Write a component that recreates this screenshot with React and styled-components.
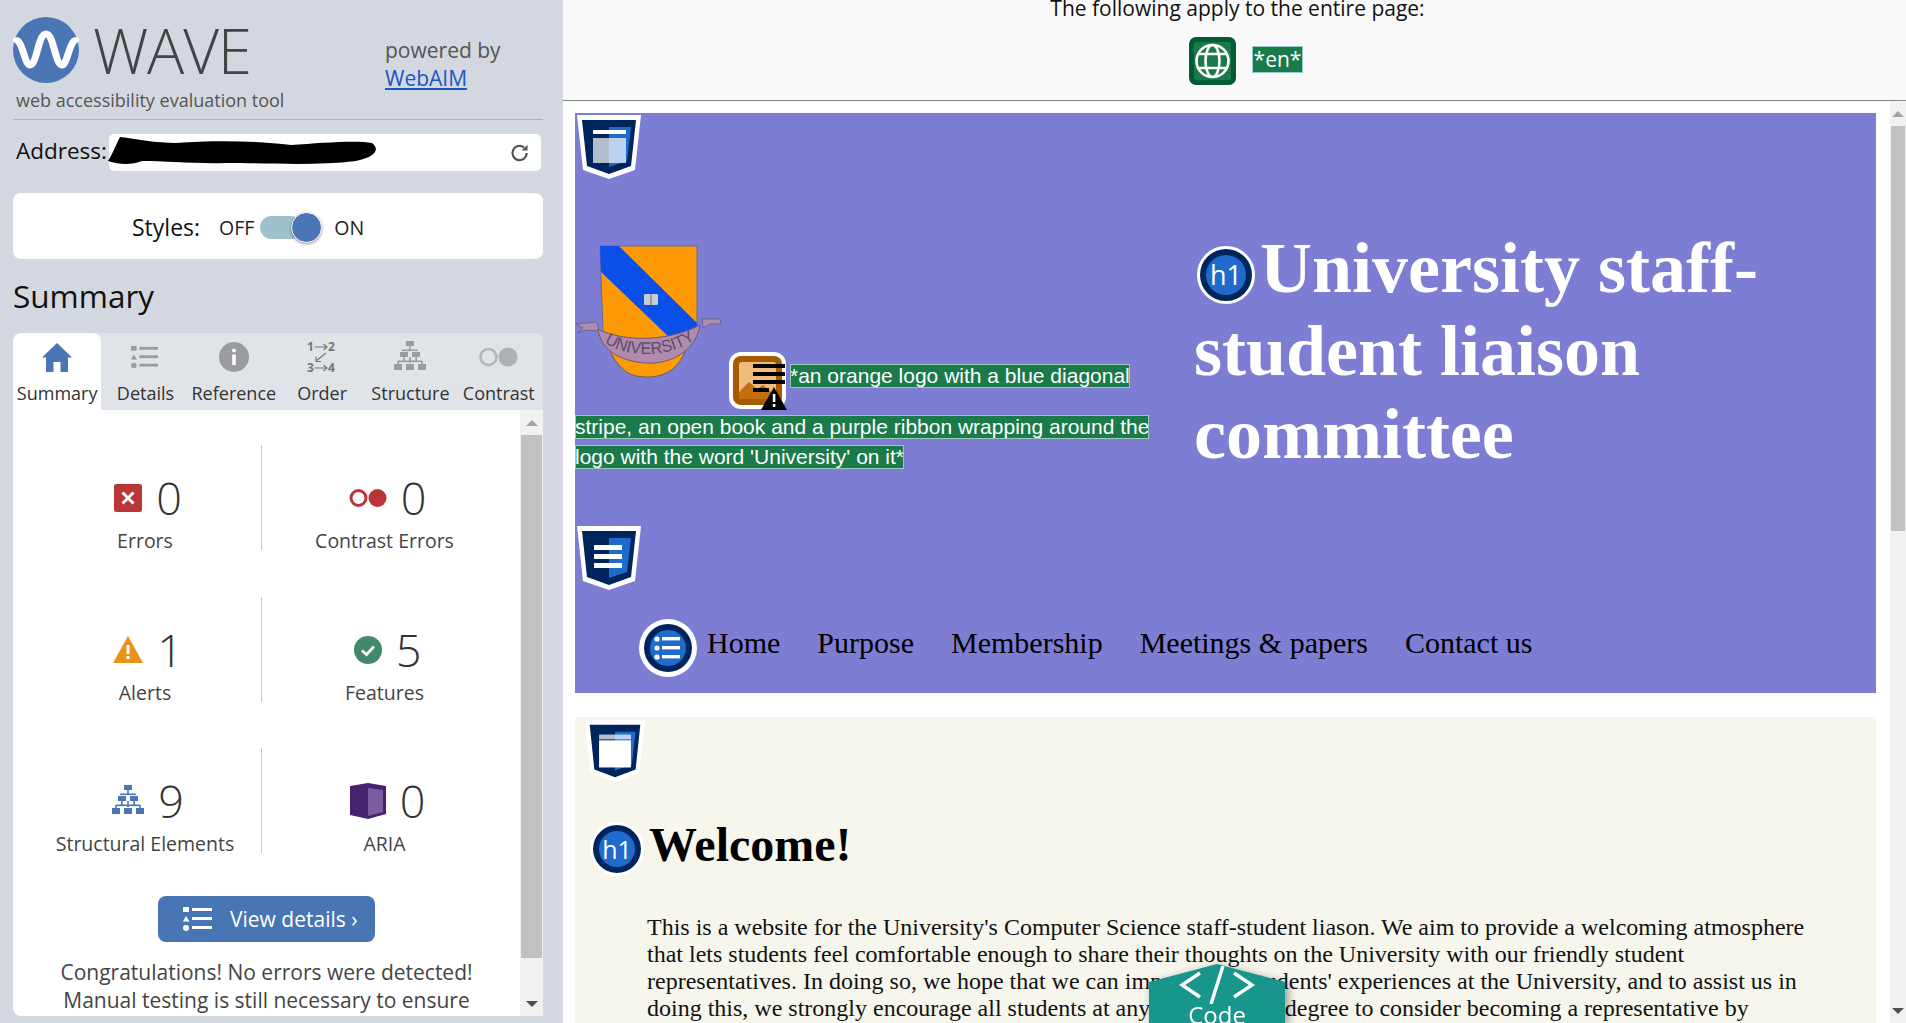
import React from "react";

import styled, { createGlobalStyle } from "styled-components";

const BLUE = "#4a76b5";
const NAVY = "#00245c";
const MID = "#1f6bcb";
const RED = "#b93538";
const SANS = `"Open Sans", "Noto Sans", sans-serif`;
const SERIF = `"Liberation Serif", serif`;

const tabs = [
  { label: "Summary", icon: "home" },
  { label: "Details", icon: "list" },
  { label: "Reference", icon: "info" },
  { label: "Order", icon: "order" },
  { label: "Structure", icon: "tree" },
  { label: "Contrast", icon: "contrast" },
];

const stats = [
  { label: "Errors", count: 0, icon: "error" },
  { label: "Contrast Errors", count: 0, icon: "contrastError" },
  { label: "Alerts", count: 1, icon: "alert" },
  { label: "Features", count: 5, icon: "feature" },
  { label: "Structural Elements", count: 9, icon: "structure" },
  { label: "ARIA", count: 0, icon: "aria" },
];

const navLinks = ["Home", "Purpose", "Membership", "Meetings & papers", "Contact us"];

const ListIcon = ({ color, size = 30 }) => (
  <svg width={size} height={size * 0.8} viewBox="0 0 30 24" fill={color}>
    <rect x="0" y="0" width="6" height="5" />
    <path d="M3 9 L6.5 14.5 L0 14.5 Z" />
    <circle cx="3" cy="21" r="3" />
    <rect x="9" y="1" width="20" height="3" />
    <rect x="9" y="10" width="20" height="3" />
    <rect x="9" y="19" width="20" height="3" />
  </svg>
);

const TreeIcon = ({ color, size = 32 }) => (
  <svg width={size} height={size} viewBox="0 0 32 32" fill={color}>
    <rect x="12" y="0" width="8" height="5" />
    <rect x="15.2" y="5" width="1.6" height="4" />
    <rect x="8" y="8.5" width="16" height="1.6" />
    <rect x="6" y="11" width="8" height="5" />
    <rect x="18" y="11" width="8" height="5" />
    <rect x="9" y="16" width="1.6" height="4" />
    <rect x="21.4" y="16" width="1.6" height="4" />
    <rect x="4" y="19.5" width="24" height="1.6" />
    <rect x="15.2" y="16" width="1.6" height="6" />
    <rect x="3.2" y="20" width="1.6" height="3" />
    <rect x="27.2" y="20" width="1.6" height="3" />
    <rect x="0" y="23" width="8" height="6" />
    <rect x="12" y="23" width="8" height="6" />
    <rect x="24" y="23" width="8" height="6" />
  </svg>
);

const TabIcon = ({ name, active }) => {
  const gray = "#9a9ca0";
  if (name === "home") {
    return (
      <svg width="30" height="29" viewBox="0 0 30 29" fill={active ? BLUE : gray}>
        <path d="M15 0 L30 14.5 L26 14.5 L26 29 L18.5 29 L18.5 19 L11.5 19 L11.5 29 L4 29 L4 14.5 L0 14.5 Z" />
      </svg>
    );
  }
  if (name === "list") return <ListIcon color={gray} size={28} />;
  if (name === "info") {
    return (
      <svg width="30" height="30" viewBox="0 0 30 30">
        <circle cx="15" cy="15" r="15" fill={gray} />
        <circle cx="15" cy="8.5" r="2" fill="#fff" />
        <rect x="13.2" y="12.5" width="3.6" height="10.5" fill="#fff" />
      </svg>
    );
  }
  if (name === "order") {
    return (
      <svg width="30" height="32" viewBox="0 0 30 32" stroke="#777" fill="none" strokeWidth="1.2">
        <path d="M7.5 6 H20 M16.5 3 L20 6 L16.5 9" />
        <path d="M19 12 L9 20 M9 15.5 V20.5 H14" />
        <path d="M7.5 27 H20 M16.5 24 L20 27 L16.5 30" />
        <g fill="#777" stroke="none" fontFamily={SANS} fontSize="12" fontWeight="700">
          <text x="0" y="10">1</text>
          <text x="21" y="10">2</text>
          <text x="0" y="31">3</text>
          <text x="21" y="31">4</text>
        </g>
      </svg>
    );
  }
  if (name === "tree") return <TreeIcon color={gray} size={32} />;
  return (
    <svg width="39" height="20" viewBox="0 0 39 20">
      <circle cx="9.5" cy="10" r="8" fill="none" stroke="#b4b6ba" strokeWidth="2.6" />
      <circle cx="29" cy="10" r="9.5" fill="#aeb0b4" />
    </svg>
  );
};

const StatIcon = ({ name }) => {
  if (name === "error") {
    return (
      <svg width="28" height="28" viewBox="0 0 28 28">
        <rect width="28" height="28" rx="2.5" fill={RED} />
        <path d="M8.5 8.5 L19.5 19.5 M19.5 8.5 L8.5 19.5" stroke="#fff" strokeWidth="3" />
      </svg>
    );
  }
  if (name === "contrastError") {
    return (
      <svg width="38" height="20" viewBox="0 0 38 20">
        <circle cx="9.5" cy="10" r="7.5" fill="none" stroke={RED} strokeWidth="3" />
        <circle cx="28.5" cy="10" r="9" fill={RED} />
      </svg>
    );
  }
  if (name === "alert") {
    return (
      <svg width="30" height="27" viewBox="0 0 30 27">
        <path d="M15 0 L30 27 L0 27 Z" fill="#e8921a" />
        <rect x="13.5" y="9" width="3" height="9" fill="#fff" />
        <rect x="13.5" y="20" width="3" height="3" fill="#fff" />
      </svg>
    );
  }
  if (name === "feature") {
    return (
      <svg width="28" height="28" viewBox="0 0 28 28">
        <circle cx="14" cy="14" r="14" fill="#42886a" />
        <path d="M8 14.5 L12.5 18.5 L20 10.5" fill="none" stroke="#fff" strokeWidth="2.8" />
      </svg>
    );
  }
  if (name === "structure") return <TreeIcon color={BLUE} size={32} />;
  return (
    <svg width="36" height="36" viewBox="0 0 36 36">
      <path d="M0 3 L18 0 L36 3 L36 31 L18 36 L0 32 Z" fill="#46236f" />
      <path d="M18 5 L33 7 L33 29 L18 33 Z" fill="#7b5ca0" />
    </svg>
  );
};

const RegionIcon = ({ kind, width = 64, height = 64 }) => (
  <svg width={width} height={height} viewBox="0 0 64 64" preserveAspectRatio="none">
    <path d="M0 0 H64 L58 55 L32 64 L6 55 Z" fill="#fff" />
    <path d="M5 5 H59 L54 51 L32 59 L10 51 Z" fill={NAVY} />
    <path d="M32 12 H54 L50 46 L32 52 Z" fill={MID} />
    {kind === "header" && (
      <>
        <rect x="16" y="15" width="33" height="4" fill="#fff" />
        <rect x="16" y="23" width="33" height="25" fill="#fff" opacity="0.7" />
      </>
    )}
    {kind === "nav" && (
      <>
        <rect x="17" y="19" width="28" height="5" fill="#fff" />
        <rect x="17" y="28" width="28" height="5" fill="#fff" />
        <rect x="17" y="37" width="28" height="5" fill="#fff" />
      </>
    )}
    {kind === "main" && (
      <>
        <rect x="15" y="15" width="34" height="5" fill="#fff" opacity="0.7" />
        <rect x="15" y="21" width="34" height="28" fill="#fff" />
      </>
    )}
  </svg>
);

const CrestLogo = () => (
  <svg width="147" height="136" viewBox="0 0 147 136">
    <path d="M35 108 C45 128 55 134 72 134 C92 134 104 124 110 108 Z" fill="#fe9a05" stroke="#6a5a60" strokeWidth="1" />
    <path d="M25 3 H122 L122 88 L95 100 H35 L28 88 Z" fill="#fe9a05" stroke="#6a6a90" strokeWidth="1" />
    <path d="M25 3 H44 L122 80 V88 L95 95 L26 29 Z" fill="#0a4fe8" />
    <rect x="69" y="51" width="14" height="11" rx="1" fill="#c8ccd8" />
    <path d="M76 51 V62" stroke="#667" strokeWidth="1" />
    <path d="M1 81 L22 79 L24 88 L10 87 L3 90 L8 85 Z" fill="#b08bb0" stroke="#6a5a80" strokeWidth="0.8" />
    <path d="M127 76 L145 76 L146 81 L135 81 L128 85 Z" fill="#b08bb0" stroke="#6a5a80" strokeWidth="0.8" />
    <path d="M23 86 C50 100 95 98 125 82 C122 104 100 122 70 120 C46 118 26 108 23 86 Z" fill="#b08bb0" stroke="#6a5a70" strokeWidth="1" />
    <path id="ribbon-arc" d="M28 98 C50 116 95 116 122 95" fill="none" />
    <text fontFamily="'Liberation Sans', sans-serif" fontSize="17" fill="#5d4a66" textLength="96" lengthAdjust="spacingAndGlyphs">
      <textPath href="#ribbon-arc" startOffset="2">UNIVERSITY</textPath>
    </text>
  </svg>
);

const ImageAlertIcon = () => (
  <svg width="58" height="58" viewBox="0 0 58 58">
    <rect width="57" height="57" rx="12" fill="#fff" />
    <rect x="4" y="4" width="49" height="49" rx="8" fill="#a85a00" />
    <rect x="10" y="10" width="37" height="37" rx="3" fill="#efbc80" />
    <path d="M10 47 V40 L20 30 L28 37 L34 33 L47 44 V47 Z" fill="#c46f0c" />
    <g fill="#000">
      <rect x="24" y="12" width="32" height="4" />
      <rect x="24" y="20" width="32" height="4" />
      <rect x="24" y="28" width="32" height="4" />
      <rect x="24" y="36" width="16" height="4" />
      <path d="M45 35 L58 58 L32 58 Z" />
    </g>
    <rect x="43.8" y="42" width="2.6" height="8" fill="#fff" />
    <rect x="43.8" y="52" width="2.6" height="3" fill="#fff" />
  </svg>
);

const LangIcon = () => (
  <svg width="49" height="50" viewBox="0 0 49 50">
    <rect width="49" height="50" rx="8" fill="#fff" />
    <rect x="1" y="1" width="47" height="48" rx="7" fill="#005c33" />
    <rect x="6" y="6" width="37" height="38" rx="2" fill="#1a7a4a" />
    <g fill="none" stroke="#fff" strokeWidth="2.6">
      <circle cx="24.5" cy="25" r="16" />
      <ellipse cx="24.5" cy="25" rx="7" ry="16" />
      <path d="M10 18 H39 M10 32 H39" />
    </g>
  </svg>
);

const NavIcon = () => (
  <svg width="58" height="58" viewBox="0 0 58 58">
    <circle cx="29" cy="29" r="29" fill="#fff" />
    <circle cx="29" cy="29" r="24" fill={NAVY} />
    <circle cx="29" cy="29" r="18" fill={MID} />
    <g fill="#fff">
      <circle cx="18" cy="20" r="2.6" />
      <circle cx="18" cy="29" r="2.6" />
      <circle cx="18" cy="38" r="2.6" />
      <rect x="23" y="18" width="18" height="3.4" />
      <rect x="23" y="27" width="18" height="3.4" />
      <rect x="23" y="36" width="18" height="3.4" />
    </g>
  </svg>
);

const Scrollbar = ({ width, thumb }) => (
  <ScrollTrack $width={width}>
    <ScrollButton>
      <ArrowUp />
    </ScrollButton>
    <ScrollThumb $height={thumb} />
    <ScrollSpacer />
    <ScrollButton>
      <ArrowDown />
    </ScrollButton>
  </ScrollTrack>
);

const Sidebar = () => (
  <SidebarPane>
    <BrandRow>
      <svg width="66" height="66" viewBox="0 0 66 66">
        <circle cx="33" cy="33" r="33" fill={BLUE} />
        <path
          d="M1 25 C9 17 11 48 17 48 C24 48 25 17 33 17 C41 17 42 48 49 48 C55 48 57 17 65 25"
          fill="none"
          stroke="#fff"
          strokeWidth="7"
        />
      </svg>
      <Wordmark>WAVE</Wordmark>
      <Powered>
        powered by
        <br />
        <PoweredLink href="#">WebAIM</PoweredLink>
      </Powered>
    </BrandRow>
    <Tagline>web accessibility evaluation tool</Tagline>
    <Rule />
    <AddressRow>
      <AddressLabel>Address:</AddressLabel>
      <AddressInput>
        <Scribble width="271" height="30" viewBox="0 0 271 30">
          <path
            d="M2 26 C6 20 8 14 14 2 C30 4 50 8 70 8 C110 5 150 6 185 10 C215 8 250 5 266 8 C274 14 270 22 250 26 C210 31 160 28 120 28 C90 29 60 26 36 26 C26 30 14 30 2 26 Z"
            fill="#000"
          />
        </Scribble>
        <svg width="20" height="20" viewBox="0 0 24 24" fill="none" stroke="#555" strokeWidth="2.6">
          <path d="M20 12 A8.5 8.5 0 1 1 17 5.5" />
          <path d="M21 2 V9 H14 Z" fill="#555" stroke="none" />
        </svg>
      </AddressInput>
    </AddressRow>
    <StylesCard>
      <StylesLabel>Styles:</StylesLabel>
      <ToggleText>OFF</ToggleText>
      <Toggle>
        <ToggleKnob />
      </Toggle>
      <ToggleText>ON</ToggleText>
    </StylesCard>
    <SummaryTitle>Summary</SummaryTitle>
    <TabBar>
      {tabs.map((tab, i) => (
        <Tab key={tab.label} $active={i === 0}>
          <TabIconSlot>
            <TabIcon name={tab.icon} active={i === 0} />
          </TabIconSlot>
          <span>{tab.label}</span>
        </Tab>
      ))}
    </TabBar>
    <Panel>
      <PanelBody>
        <StatGrid>
          {stats.map((stat) => (
            <StatCell key={stat.label}>
              <StatTop>
                <StatIcon name={stat.icon} />
                <StatCount>{stat.count}</StatCount>
              </StatTop>
              <StatLabel>{stat.label}</StatLabel>
            </StatCell>
          ))}
        </StatGrid>
        <DetailsButton>
          <ListIcon color="#fff" size={30} />
          View details ›
        </DetailsButton>
        <Congrats>
          Congratulations! No errors were detected!
          <br />
          Manual testing is still necessary to ensure
        </Congrats>
      </PanelBody>
      <Scrollbar width={23} thumb={523} />
    </Panel>
  </SidebarPane>
);

const App = () => (
  <Page>
    <GlobalStyle />
    <Sidebar />
    <Report>
      <PageNotes>
        <PageNotesTitle>The following apply to the entire page:</PageNotesTitle>
        <PageNotesRow>
          <LangIcon />
          <LangTag>*en*</LangTag>
        </PageNotesRow>
      </PageNotes>
      <ReportBody>
        <Viewport>
          <Banner>
            <RegionSlot>
              <RegionIcon kind="header" />
            </RegionSlot>
            <Hero>
              <Figure>
                <CrestSlot>
                  <CrestLogo />
                </CrestSlot>
                <AlertSlot>
                  <ImageAlertIcon />
                </AlertSlot>
                <AltText>
                  *an orange logo with a blue diagonal stripe, an open book and a purple ribbon wrapping around the logo with the word 'University' on it*
                </AltText>
              </Figure>
              <SiteTitle>
                <HeadingBadge $size={58} $lift={7}>h1</HeadingBadge>
                University staff-student liaison committee
              </SiteTitle>
            </Hero>
            <RegionSlot>
              <RegionIcon kind="nav" />
            </RegionSlot>
            <Nav>
              <NavIcon />
              {navLinks.map((link) => (
                <NavLink key={link}>{link}</NavLink>
              ))}
            </Nav>
          </Banner>
          <MainArea>
            <MainRegion>
              <RegionIcon kind="main" width={60} height={62} />
            </MainRegion>
            <Welcome>
              <HeadingBadge $size={54} $lift={2}>h1</HeadingBadge>
              Welcome!
            </Welcome>
            <Intro>
              This is a website for the University's Computer Science staff-student liason. We aim to provide a welcoming atmosphere that lets students feel comfortable enough to share their thoughts on the University with our friendly student representatives. In doing so, we hope that we can improve our students' experiences at the University, and to assist us in doing this, we strongly encourage all students at any level of their degree to consider becoming a representative by
            </Intro>
          </MainArea>
        </Viewport>
        <Scrollbar width={16} thumb={405} />
      </ReportBody>
    </Report>
    <CodeShadow>
      <CodeTab>
        <CodeGlyph width="76" height="38" viewBox="0 0 76 38" fill="none" stroke="#fff" strokeWidth="3.4">
          <path d="M21 7 L3 19 L21 31" />
          <path d="M44 0 L32 38" />
          <path d="M55 7 L73 19 L55 31" />
        </CodeGlyph>
        <CodeLabel>Code</CodeLabel>
      </CodeTab>
    </CodeShadow>
  </Page>
);

const GlobalStyle = createGlobalStyle`
  html, body {
    margin: 0;
    height: 100%;
    overflow: hidden;
    background: #fff;
  }
`;

const Page = styled.div`
  display: flex;
  width: 1906px;
  height: 1023px;
  overflow: hidden;
  font-family: ${SANS};
`;

const SidebarPane = styled.aside`
  box-sizing: border-box;
  flex: 0 0 563px;
  height: 1023px;
  padding: 17px 20px 0 13px;
  background: #d3d8e0;
  overflow: hidden;
`;

const BrandRow = styled.div`
  display: flex;
  height: 66px;
`;

const Wordmark = styled.div`
  margin: 0 0 0 14px;
  font-size: 62px;
  font-weight: 300;
  letter-spacing: -1.2px;
  line-height: 66px;
  color: #444;
`;

const Powered = styled.div`
  box-sizing: border-box;
  width: 158px;
  margin: 19px 0 0 auto;
  font-size: 21px;
  line-height: 28px;
  color: #555;
`;

const PoweredLink = styled.a`
  color: #1a56c4;
`;

const Tagline = styled.div`
  margin: 5px 0 0 3px;
  font-size: 18px;
  line-height: 24px;
  color: #555;
`;

const Rule = styled.div`
  height: 1px;
  margin-top: 7px;
  background: #aeb2b8;
`;

const AddressRow = styled.div`
  display: flex;
  align-items: center;
  height: 37px;
  margin-top: 14px;
`;

const AddressLabel = styled.div`
  flex: 0 0 96px;
  box-sizing: border-box;
  margin-top: -4px;
  padding-left: 3px;
  font-size: 22.5px;
  white-space: nowrap;
  color: #111;
`;

const AddressInput = styled.div`
  position: relative;
  display: flex;
  align-items: center;
  justify-content: flex-end;
  box-sizing: border-box;
  width: 432px;
  height: 37px;
  padding-right: 11px;
  border-radius: 5px;
  background: #fff;
`;

const Scribble = styled.svg`
  position: absolute;
  left: -3px;
  top: 1px;
`;

const StylesCard = styled.div`
  display: flex;
  align-items: center;
  box-sizing: border-box;
  height: 66px;
  margin-top: 22px;
  padding: 2px 0 0 119px;
  border-radius: 8px;
  background: #fff;
`;

const StylesLabel = styled.div`
  margin-right: 19px;
  font-size: 23px;
  color: #111;
`;

const ToggleText = styled.div`
  font-size: 19.5px;
  color: #222;
`;

const Toggle = styled.div`
  position: relative;
  width: 42px;
  height: 23px;
  margin: 0 32px 0 6px;
  border-radius: 12px;
  background: #9fc1cc;
`;

const ToggleKnob = styled.div`
  position: absolute;
  top: -4px;
  left: 31px;
  box-sizing: border-box;
  width: 31px;
  height: 31px;
  border: 1px solid #fff;
  border-radius: 50%;
  background: ${BLUE};
  box-shadow: 0 1px 3px rgba(0, 0, 0, 0.4);
`;

const SummaryTitle = styled.h2`
  margin: 18px 0 18px;
  font-size: 31.5px;
  font-weight: 400;
  line-height: 38px;
  color: #111;
`;

const TabBar = styled.div`
  display: flex;
  height: 77px;
  border-radius: 8px 8px 0 0;
  background: #e0e3e8;
  overflow: hidden;
`;

const Tab = styled.div`
  display: flex;
  flex: 1 1 0;
  flex-direction: column;
  align-items: center;
  border-radius: 8px 8px 0 0;
  font-size: 18px;
  line-height: 24px;
  white-space: nowrap;
  color: #333;
  background: ${(p) => (p.$active ? "#fff" : "transparent")};
`;

const TabIconSlot = styled.div`
  display: flex;
  align-items: center;
  justify-content: center;
  height: 32px;
  margin: 8px 0;
`;

const Panel = styled.div`
  display: flex;
  height: 606px;
  border-radius: 0 0 0 8px;
  background: #fff;
  overflow: hidden;
`;

const PanelBody = styled.div`
  flex: 1;
  min-width: 0;
`;

const StatGrid = styled.div`
  display: grid;
  grid-template-columns: 233px 245px;
  grid-auto-rows: 105px;
  row-gap: 46.5px;
  margin: 35px 0 0 16px;
`;

const StatCell = styled.div`
  display: flex;
  flex-direction: column;
  align-items: center;
  box-sizing: border-box;
  padding-top: 28px;

  &:nth-child(odd) {
    border-right: 1px solid #c8c8c8;
  }
`;

const StatTop = styled.div`
  display: flex;
  align-items: center;
  gap: 14px;
  height: 50px;
  padding-left: 6px;
`;

const StatCount = styled.div`
  font-size: 45px;
  font-weight: 350;
  line-height: 50px;
  color: #333;
`;

const StatLabel = styled.div`
  margin-top: 6px;
  font-size: 19.5px;
  line-height: 24px;
  white-space: nowrap;
  color: #444;
`;

const DetailsButton = styled.div`
  display: flex;
  align-items: center;
  gap: 17px;
  box-sizing: border-box;
  width: 217px;
  height: 46px;
  margin: 43px auto 0;
  padding-left: 25px;
  border-radius: 8px;
  font-size: 21px;
  white-space: nowrap;
  color: #fff;
  background: #4876b4;
`;

const Congrats = styled.p`
  margin: 16px 0 0;
  font-size: 21px;
  line-height: 28px;
  text-align: center;
  white-space: nowrap;
  color: #444;
`;

const ScrollTrack = styled.div`
  display: flex;
  flex: 0 0 ${(p) => p.$width}px;
  flex-direction: column;
  align-items: center;
  background: #f1f1f1;
`;

const ScrollButton = styled.div`
  display: flex;
  flex: 0 0 25px;
  align-items: center;
  justify-content: center;
`;

const ArrowUp = styled.div`
  width: 0;
  height: 0;
  border-right: 6px solid transparent;
  border-bottom: 6px solid #a3a3a3;
  border-left: 6px solid transparent;
`;

const ArrowDown = styled.div`
  width: 0;
  height: 0;
  border-top: 6px solid #505050;
  border-right: 6px solid transparent;
  border-left: 6px solid transparent;
`;

const ScrollThumb = styled.div`
  width: calc(100% - 2px);
  height: ${(p) => p.$height}px;
  background: #c1c1c1;
`;

const ScrollSpacer = styled.div`
  flex: 1;
`;

const Report = styled.main`
  display: flex;
  flex: 1;
  flex-direction: column;
  min-width: 0;
`;

const PageNotes = styled.div`
  display: flex;
  flex: 0 0 101px;
  flex-direction: column;
  align-items: center;
  box-sizing: border-box;
  padding-left: 6px;
  border-bottom: 1px solid #7d8a7d;
  background: #f9f9f9;
  overflow: hidden;
`;

const PageNotesTitle = styled.div`
  margin-top: -7px;
  font-size: 21px;
  line-height: 30px;
  white-space: nowrap;
  color: #111;
`;

const PageNotesRow = styled.div`
  display: flex;
  align-items: center;
  gap: 15px;
  margin-top: 13px;
  padding-left: 16px;
`;

const LangTag = styled.span`
  box-sizing: border-box;
  height: 27px;
  margin-top: -3px;
  padding: 0 1px;
  border: 1px solid #9cc;
  font-size: 21px;
  line-height: 25px;
  color: #fff;
  background: #1a7a4a;
`;

const ReportBody = styled.div`
  display: flex;
  flex: 1;
  min-height: 0;
`;

const Viewport = styled.div`
  flex: 1;
  min-width: 0;
  padding: 12px 14px 0 12px;
  overflow: hidden;
`;

const Banner = styled.header`
  height: 580px;
  background: #7c7dd3;
`;

const RegionSlot = styled.div`
  box-sizing: border-box;
  height: 66px;
  padding: 2px 0 0 2px;
`;

const Hero = styled.div`
  display: flex;
  height: 345px;
`;

const Figure = styled.div`
  flex: 0 0 579px;
  margin-top: 64px;
  font-family: "Liberation Sans", Arial, sans-serif;
  font-size: 21px;
  line-height: 30px;
`;

const CrestSlot = styled.span`
  display: inline-block;
  vertical-align: 4px;
  line-height: 0;
`;

const AlertSlot = styled.span`
  display: inline-block;
  margin: 0 3px 2px 7px;
  vertical-align: -27px;
  line-height: 0;
`;

const AltText = styled.span`
  padding: 0 0 1px;
  outline: 1px solid #9ccbb4;
  outline-offset: -1px;
  color: #fff;
  background: #1a7a4a;
`;

const SiteTitle = styled.h1`
  width: 600px;
  margin: 48px 0 0 40px;
  font-family: ${SERIF};
  font-size: 72px;
  font-weight: 700;
  line-height: 83px;
  color: #fff;
`;

const HeadingBadge = styled.span`
  display: inline-block;
  box-sizing: border-box;
  width: ${(p) => p.$size}px;
  height: ${(p) => p.$size}px;
  margin: 0 5px 0 3px;
  border: 3px solid #fff;
  border-radius: 50%;
  box-shadow: inset 0 0 0 6px ${NAVY};
  font-family: ${SANS};
  font-size: ${(p) => Math.round(p.$size * 0.46)}px;
  font-weight: 400;
  line-height: ${(p) => p.$size - 6}px;
  text-align: center;
  vertical-align: ${(p) => p.$lift}px;
  color: #fff;
  background: ${MID};
`;

const Nav = styled.nav`
  display: flex;
  align-items: center;
  gap: 37px;
  height: 58px;
  margin-top: 29px;
  padding-left: 64px;
`;

const NavLink = styled.a`
  padding-bottom: 10px;
  font-family: ${SERIF};
  font-size: 30px;
  color: #000;

  &:first-of-type {
    margin-left: -27px;
  }
`;

const MainArea = styled.section`
  height: 400px;
  margin-top: 24px;
  background: #f6f6ec;
`;

const MainRegion = styled.div`
  height: 64px;
  padding: 3px 0 0 10px;
`;

const Welcome = styled.h1`
  margin: 33px 0 0 12px;
  font-family: ${SERIF};
  font-size: 48px;
  font-weight: 700;
  line-height: 56px;
  color: #000;
`;

const Intro = styled.p`
  width: 1165px;
  margin: 38px 0 0 72px;
  font-family: ${SERIF};
  font-size: 24px;
  line-height: 27px;
  color: #111;
`;

const CodeShadow = styled.div`
  position: fixed;
  top: 964px;
  left: 1149px;
  filter: drop-shadow(3px 3px 5px rgba(0, 0, 0, 0.4));
`;

const CodeTab = styled.div`
  display: flex;
  flex-direction: column;
  align-items: center;
  box-sizing: border-box;
  width: 136px;
  height: 59px;
  padding-top: 2px;
  color: #fff;
  background: #18968c;
  clip-path: polygon(50% 0, 100% 18px, 100% 100%, 0 100%, 0 18px);
`;

const CodeGlyph = styled.svg`
  flex-shrink: 0;
`;

const CodeLabel = styled.div`
  flex-shrink: 0;
  margin-top: -4px;
  font-size: 24px;
  line-height: 30px;
`;

export default App;
